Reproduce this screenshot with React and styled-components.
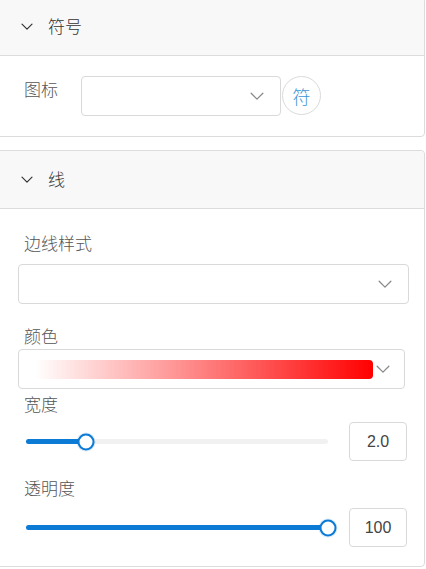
import styled, { createGlobalStyle } from "styled-components";

const GlobalStyle = createGlobalStyle`
  html, body {
    margin: 0;
    padding: 0;
    background: #ffffff;
    overflow: hidden;
  }
  body {
    font-family: "Noto Sans CJK SC", "Liberation Sans", sans-serif;
  }
`;

const Page = styled.div`
  width: 426px;
  height: 569px;
  overflow: hidden;
`;

const Panel = styled.section`
  margin: ${(p) => p.$first ? "-3px 0 0 -7px" : "13px 0 0 -7px"};
  width: 432px;
  box-sizing: border-box;
  border: 1px solid #dcdcdc;
  border-radius: 4px;
  background: #fff;
`;

const Header = styled.div`
  height: 57px;
  display: flex;
  align-items: center;
  padding-left: 27px;
  background: #f8f8f8;
  border-bottom: 1px solid #dcdcdc;
  border-radius: 4px 4px 0 0;
  color: #333;
  font-size: 17px;
  font-weight: 300;
`;

const HeaderTitle = styled.span`
  margin-left: 15px;
  margin-top: -2px;
`;

const Chevron = ({ size = 12, color = "#333", width = 1.2 }) => (
  <svg width={size} height={size * 0.6} viewBox="0 0 12 7" fill="none">
    <path d="M1 1l5 5 5-5" stroke={color} strokeWidth={width} strokeLinecap="round" strokeLinejoin="round" />
  </svg>
);

const IconRow = styled.div`
  display: flex;
  align-items: flex-start;
  padding: 20px 0 20px 30px;
`;

const Label = styled.div`
  font-size: 17px;
  line-height: 22px;
  height: 22px;
  font-weight: 300;
  color: #555;
  margin: ${(p) => p.$mt || 0}px 0 0 ${(p) => p.$ml || 0}px;
`;

const Select = styled.div`
  width: ${(p) => p.$w}px;
  height: 40px;
  box-sizing: border-box;
  margin: ${(p) => p.$mt || 0}px 0 0 ${(p) => p.$ml || 0}px;
  border: 1px solid #d9d9d9;
  border-radius: 4px;
  display: flex;
  align-items: center;
  justify-content: flex-end;
  padding: 0 ${(p) => p.$pr || 16}px 0 16px;
  background: #fff;
`;

const Swatch = styled.div`
  flex: 1;
  height: 19px;
  margin-right: 3px;
  border-radius: 0 4px 4px 0;
  background: linear-gradient(to right, rgba(255, 0, 0, 0) 0%, rgba(255, 0, 0, 0.5) 50%, #ff0000 100%);
`;

const RoundButton = styled.div`
  width: 39px;
  height: 39px;
  box-sizing: border-box;
  margin-left: 1px;
  border: 1px solid #dadada;
  border-radius: 50%;
  display: flex;
  align-items: center;
  justify-content: center;
  color: #3b95d3;
  font-size: 18px;
  font-weight: 300;
`;

const Body = styled.div`
  padding: 23px 0 19px 24px;
`;

const SliderRow = styled.div`
  display: flex;
  align-items: center;
  height: 39px;
  margin-top: ${(p) => p.$mt}px;
  padding-left: 8px;
`;

const Track = styled.div`
  position: relative;
  width: 302px;
  height: 5px;
  border-radius: 3px;
  background: #f1f1f1;
`;

const Fill = styled.div`
  height: 100%;
  border-radius: 3px;
  background: #0c7bd5;
`;

const Thumb = styled.div`
  position: absolute;
  top: 50%;
  width: 17px;
  height: 17px;
  box-sizing: border-box;
  border: 2.5px solid #0c7bd5;
  border-radius: 50%;
  background: #fff;
  transform: translate(-50%, -50%);
  box-shadow: 0 0 0 1px rgba(12, 123, 213, 0.15);
`;

const NumberBox = styled.div`
  width: 58px;
  height: 39px;
  box-sizing: border-box;
  margin-left: 21px;
  border: 1px solid #d9d9d9;
  border-radius: 4px;
  display: flex;
  align-items: center;
  justify-content: center;
  font-family: "Liberation Sans", Arial, sans-serif;
  font-size: 16px;
  color: #444;
`;

const Slider = ({ value, min, max, label, mt }) => {
  const pct = ((value - min) / (max - min)) * 100;
  return (
    <SliderRow $mt={mt}>
      <Track>
        <Fill style={{ width: `${pct}%` }} />
        <Thumb style={{ left: `${pct}%` }} />
      </Track>
      <NumberBox>{label}</NumberBox>
    </SliderRow>
  );
};

export default function App() {
  return (
    <Page>
      <GlobalStyle />
      <Panel $first>
        <Header>
          <Chevron />
          <HeaderTitle>符号</HeaderTitle>
        </Header>
        <IconRow>
          <Label $mt={2}>图标</Label>
          <Select $w={200} $ml={23} $pr={16}>
            <Chevron size={14} color="#8a8a8a" width={1.1} />
          </Select>
          <RoundButton>符</RoundButton>
        </IconRow>
      </Panel>
      <Panel>
        <Header>
          <Chevron />
          <HeaderTitle>线</HeaderTitle>
        </Header>
        <Body>
          <Label $ml={6}>边线样式</Label>
          <Select $w={391} $mt={10} $pr={16}>
            <Chevron size={14} color="#8a8a8a" width={1.1} />
          </Select>
          <Label $ml={6} $mt={21}>颜色</Label>
          <Select $w={387} $mt={2} $pr={14}>
            <Swatch />
            <Chevron size={14} color="#8a8a8a" width={1.1} />
          </Select>
          <Label $ml={6} $mt={4}>宽度</Label>
          <Slider value={2} min={0} max={10} label="2.0" mt={7} />
          <Label $ml={6} $mt={16}>透明度</Label>
          <Slider value={100} min={0} max={100} label="100" mt={9} />
        </Body>
      </Panel>
    </Page>
  );
}
